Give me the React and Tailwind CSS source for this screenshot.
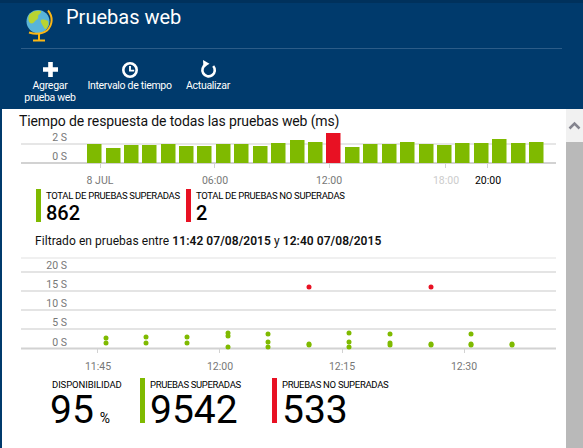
const font = { fontFamily: 'Roboto, "Noto Sans", sans-serif' };

// tops of the response-time bars, in page pixels
const barTops = [144, 148, 145, 145, 144, 146, 146, 144, 144, 146, 143, 140, 142, 133, 147, 144, 144, 142, 144, 145, 143, 143, 139, 143, 142];
const barLefts = [87, 106, 124, 142, 161, 179, 197, 216, 234, 253, 271, 290, 308, 326, 345, 363, 382, 400, 419, 437, 455, 474, 492, 511, 529];

const greenDots = [
  [106, 338], [106, 343],
  [146, 337], [146, 343],
  [187, 337], [187, 343],
  [228, 333], [228, 336], [228, 347],
  [268, 334], [268, 342], [268, 347],
  [309, 344], [309, 345],
  [349, 333], [349, 342], [349, 347],
  [390, 334], [390, 343], [390, 345],
  [431, 344], [431, 345],
  [471, 334], [471, 344], [471, 345],
  [512, 344], [512, 345],
];

function Globe() {
  return (
    <svg width="30" height="36" viewBox="26 8 30 36" className="shrink-0">
      <circle cx="38" cy="21.5" r="11.5" fill="#59b4d9" />
      <path d="M29 15c3-4 8-5 12-4 1 2-2 3-3 5 1 2-1 4-3 5-1 2-3 3-5 2-2-2-2-5-1-8z" fill="#b8d432" />
      <path d="M41 20c2-1 5 0 7 1 1 3 0 6-2 8-2 0-2-2-3-3-1-2-3-4-2-6z" fill="#b8d432" />
      <path d="M48 10.5c5 6 5 14-1 20-4 3-11 4-18 2" fill="none" stroke="#fcb714" strokeWidth="2" />
      <path d="M39 34v6M33 40.5h12" fill="none" stroke="#fcb714" strokeWidth="2" />
    </svg>
  );
}

function PlusIcon() {
  return (
    <svg width="15" height="15" viewBox="0 0 15 15">
      <path d="M7.5 0v15M0 7.5h15" fill="none" stroke="#fff" strokeWidth="4.6" />
    </svg>
  );
}

function ClockIcon() {
  return (
    <svg width="16" height="16" viewBox="0 0 16 16">
      <circle cx="8" cy="8" r="6.7" fill="none" stroke="#fff" strokeWidth="2.6" />
      <path d="M8 4v4.6h4.2" fill="none" stroke="#fff" strokeWidth="1.9" />
    </svg>
  );
}

function RefreshIcon() {
  return (
    <svg width="17" height="19" viewBox="0 0 17 19">
      <path d="M13.2 6A6.2 6.2 0 1 1 6 4.5" fill="none" stroke="#fff" strokeWidth="2.6" />
      <path d="M3 0L9.5 3.8L3.5 7.5z" fill="#fff" />
    </svg>
  );
}

function Command({ icon, lines, className }) {
  return (
    <div className={`flex flex-col items-center text-white text-[10.5px] leading-[12px] tracking-[-0.3px] ${className}`}>
      <div className="h-[21px] flex items-center justify-center">{icon}</div>
      <div className="text-center whitespace-nowrap">
        {lines.map((l) => (
          <div key={l}>{l}</div>
        ))}
      </div>
    </div>
  );
}

function Kpi({ color, label, value, className, labelClass, valueClass, barClass }) {
  return (
    <div className={`flex ${className}`}>
      <div className={`w-[5px] shrink-0 ${barClass}`} style={{ backgroundColor: color }} />
      <div className="ml-[5px] text-black">
        <div className={`whitespace-nowrap ${labelClass}`}>{label}</div>
        <div className={valueClass}>{value}</div>
      </div>
    </div>
  );
}

function TopChart() {
  const tick = [100, 214, 329, 445, 487];
  return (
    <svg width="566" height="72" viewBox="0 114 566 72" className="block" style={font}>
      <text x="67" y="141" textAnchor="end" fontSize="10.5" fill="#777">2 S</text>
      <text x="67" y="160" textAnchor="end" fontSize="10.5" fill="#777">0 S</text>
      <rect x="21" y="143" width="535" height="2" fill="#e6e6e6" />
      <rect x="21" y="162" width="535" height="2" fill="#d2d2d2" />
      {tick.map((x) => (
        <rect key={x} x={x} y="164" width="1" height="4" fill="#d2d2d2" />
      ))}
      {barTops.map((t, i) => (
        <rect key={i} x={barLefts[i]} y={t} width="14.5" height={163 - t} fill={i === 13 ? '#e81123' : '#7fba00'} />
      ))}
      <text x="100" y="184" textAnchor="middle" fontSize="10.5" fill="#777">8 JUL</text>
      <text x="215" y="184" textAnchor="middle" fontSize="10.5" fill="#777">06:00</text>
      <text x="329" y="184" textAnchor="middle" fontSize="10.5" fill="#777">12:00</text>
      <text x="446" y="184" textAnchor="middle" fontSize="10.5" fill="#ccc">18:00</text>
      <text x="488" y="184" textAnchor="middle" fontSize="10.5" fill="#000">20:00</text>
    </svg>
  );
}

function ScatterChart() {
  const lines = [272, 291, 310, 329];
  const yLabels = [['20 S', 269], ['15 S', 288], ['10 S', 307], ['5 S', 326], ['0 S', 346]];
  const xLabels = [['11:45', 98], ['12:00', 220], ['12:15', 342], ['12:30', 464]];
  return (
    <svg width="566" height="122" viewBox="0 252 566 122" className="block" style={font}>
      <rect x="21" y="257" width="535" height="2" fill="#f0f0f0" />
      {lines.map((y) => (
        <rect key={y} x="21" y={y - 1} width="535" height="2" fill="#e4e4e4" />
      ))}
      <rect x="21" y="347.5" width="535" height="2" fill="#d2d2d2" />
      {[97, 219, 342, 464].map((x) => (
        <rect key={x} x={x} y="349" width="1" height="4" fill="#d2d2d2" />
      ))}
      {yLabels.map(([t, y]) => (
        <text key={t} x="67" y={y} textAnchor="end" fontSize="10.5" fill="#777">{t}</text>
      ))}
      {greenDots.map(([x, y], i) => (
        <circle key={i} cx={x} cy={y} r="2.5" fill="#7fba00" />
      ))}
      <circle cx="309" cy="287" r="2.5" fill="#e81123" />
      <circle cx="431" cy="287" r="2.5" fill="#e81123" />
      {xLabels.map(([t, x]) => (
        <text key={t} x={x} y="370" textAnchor="middle" fontSize="10.5" fill="#777">{t}</text>
      ))}
    </svg>
  );
}

export default function App() {
  return (
    <div className="w-[583px] h-[448px] overflow-hidden flex flex-col bg-white" style={font}>
      {/* blade header */}
      <div className="h-[109px] shrink-0 bg-[#003a6c] border-t-[3px] border-[#00315c]">
        <div className="h-[46px] mx-[21px] border-b border-[#2c5c88] flex items-start">
          <div className="ml-[5px] mt-[5px]">
            <Globe />
          </div>
          <div className="ml-[10px] mt-[1px] text-white text-[20px] leading-[26px]">Pruebas web</div>
        </div>
        <div className="flex items-start mt-[10px] ml-[21px]">
          <Command className="w-[58px]" icon={<PlusIcon />} lines={['Agregar', 'prueba web']} />
          <Command className="w-[83px] ml-[9px]" icon={<ClockIcon />} lines={['Intervalo de tiempo']} />
          <Command className="w-[44px] ml-[15px]" icon={<RefreshIcon />} lines={['Actualizar']} />
        </div>
      </div>

      <div className="flex-1 flex min-h-0 border-l-2 border-[#003a6c]">
        <div className="flex-1 -ml-[2px] pl-0">
          <div className="pl-[19px] pt-[2px] text-[14px] leading-[20px] tracking-[-0.12px] text-[#111] whitespace-nowrap">
            Tiempo de respuesta de todas las pruebas web (ms)
          </div>
          <div className="mt-[-17px] h-[72px]">
            <TopChart />
          </div>

          <div className="flex mt-[3px] pl-[36px]">
            <Kpi
              color="#7fba00"
              label="TOTAL DE PRUEBAS SUPERADAS"
              value="862"
              className="w-[150px]"
              barClass="h-[33px]"
              labelClass="text-[9.5px] leading-[14px] tracking-[-0.3px]"
              valueClass="text-[20px] leading-[20px] font-medium"
            />
            <Kpi
              color="#e81123"
              label="TOTAL DE PRUEBAS NO SUPERADAS"
              value="2"
              barClass="h-[33px]"
              labelClass="text-[9.5px] leading-[14px] tracking-[-0.3px]"
              valueClass="text-[20px] leading-[20px] font-medium"
            />
          </div>

          <div className="pl-[35px] mt-[10px] text-[12px] leading-[17px] tracking-[0.06px] text-[#111] whitespace-nowrap">
            Filtrado en pruebas entre <b className="font-semibold">11:42 07/08/2015</b> y <b className="font-semibold">12:40 07/08/2015</b>
          </div>

          <div className="mt-[2px]">
            <ScatterChart />
          </div>

          <div className="flex mt-[4px]">
            <div className="ml-[52px] w-[88px] text-black">
              <div className="text-[9.5px] leading-[14px] tracking-[-0.1px] whitespace-nowrap">DISPONIBILIDAD</div>
              <div className="flex items-end -ml-[2px] mt-[1px]">
                <span className="text-[39px] leading-[34px]">95</span>
                <span className="text-[14px] leading-[18px] ml-[6px]">%</span>
              </div>
            </div>
            <Kpi
              color="#7fba00"
              label="PRUEBAS SUPERADAS"
              value="9542"
              className="w-[132px]"
              barClass="h-[45px]"
              labelClass="text-[9.5px] leading-[14px] tracking-[-0.35px]"
              valueClass="text-[39px] leading-[34px] mt-[1px]"
            />
            <Kpi
              color="#e81123"
              label="PRUEBAS NO SUPERADAS"
              value="533"
              barClass="h-[45px]"
              labelClass="text-[9.5px] leading-[14px] tracking-[-0.3px]"
              valueClass="text-[39px] leading-[34px] mt-[1px]"
            />
          </div>
        </div>

        {/* scrollbar */}
        <div className="w-[17px] shrink-0 bg-[#f1f1f1] flex flex-col">
          <div className="h-[33px] flex items-center justify-center">
            <svg width="13" height="9" viewBox="0 0 13 9">
              <path d="M1.5 7.5L6.5 2.5L11.5 7.5" fill="none" stroke="#85858f" strokeWidth="2.5" />
            </svg>
          </div>
          <div className="flex-1 bg-[#b9b9b9]" />
        </div>
      </div>
    </div>
  );
}
